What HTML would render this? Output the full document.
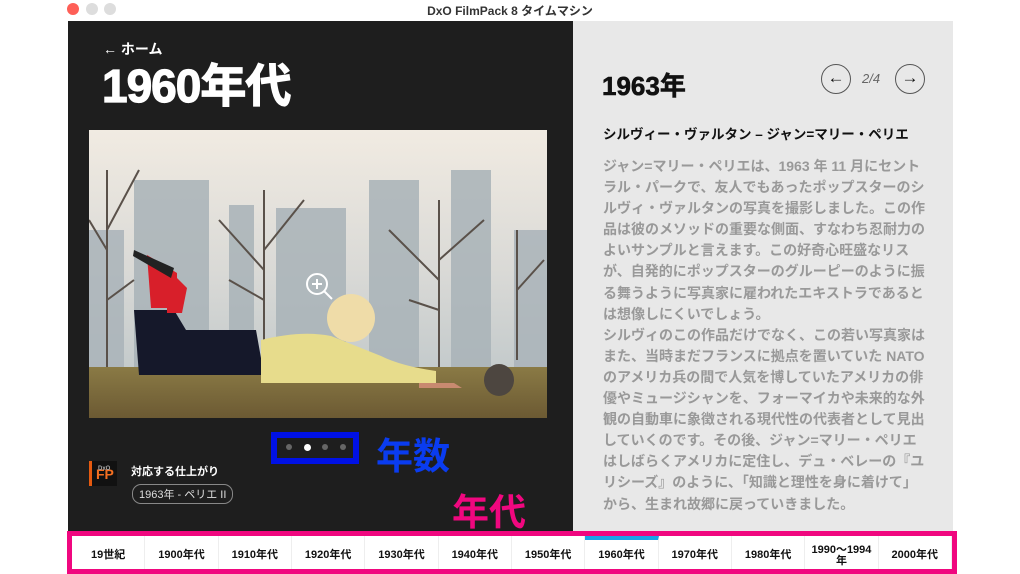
<!DOCTYPE html>
<html><head><meta charset="utf-8"><style>
*{margin:0;padding:0;box-sizing:border-box}
body{width:1020px;height:574px;background:#fff;position:relative;overflow:hidden;font-family:"Liberation Sans","Noto Sans CJK JP",sans-serif}
.t{position:absolute;white-space:nowrap}
.dot{position:absolute;width:12px;height:12px;border-radius:50%;top:3px}
#left{position:absolute;left:68px;top:21px;width:505px;height:512px;background:#1e1e1e}
#right{position:absolute;left:573px;top:21px;width:380px;height:512px;background:#e8e8e8}
.p{position:absolute;left:603px;font-size:14px;font-weight:bold;color:#999;white-space:nowrap;line-height:21.1px}
#nav{position:absolute;left:67px;top:531px;width:890px;height:43px;border:5px solid #f0077f;background:#fff;display:flex}
#nav div{flex:1;border-right:1px solid #eee;font-size:11px;font-weight:bold;color:#111;display:flex;align-items:center;justify-content:center;text-align:center;line-height:11px;position:relative;padding-top:6px}
.circ{position:absolute;width:30px;height:30px;border:1.5px solid #555;border-radius:50%;top:64px;font-size:17px;text-align:center;line-height:26px;color:#111}
</style></head><body>
<div class="dot" style="left:67px;background:#fe5f57"></div>
<div class="dot" style="left:86px;background:#ddd"></div>
<div class="dot" style="left:104px;background:#ddd"></div>
<div class="t" style="left:0;width:1020px;text-align:center;top:2px;font-size:12px;font-weight:bold;color:#333">DxO FilmPack 8 タイムマシン</div>
<div id="left"></div>
<div id="right"></div>
<div class="t" style="left:103px;top:39px;color:#fff;font-size:14px;font-weight:bold">← ホーム</div>
<div class="t" style="left:102px;top:50px;color:#fff;font-size:46px;font-weight:bold;letter-spacing:-1px;-webkit-text-stroke:1.2px #fff">1960年代</div>
<svg style="position:absolute;left:89px;top:130px" width="458" height="288" viewBox="0 0 458 288">
<defs><linearGradient id="sky" x1="0" y1="0" x2="0" y2="1"><stop offset="0" stop-color="#f1ebe2"/><stop offset=".5" stop-color="#d9d9d6"/><stop offset="1" stop-color="#b9c3c6"/></linearGradient>
<linearGradient id="gr" x1="0" y1="0" x2="0" y2="1"><stop offset="0" stop-color="#8a7a45"/><stop offset="1" stop-color="#6c5a33"/></linearGradient></defs>
<rect width="458" height="288" fill="url(#sky)"/>
<g fill="#a9b3b8" opacity=".85"><rect x="45" y="50" width="75" height="190"/><rect x="140" y="75" width="25" height="165"/><rect x="187" y="78" width="70" height="162"/><rect x="280" y="50" width="50" height="190"/><rect x="362" y="40" width="40" height="200"/><rect x="425" y="100" width="33" height="140"/><rect x="0" y="100" width="35" height="140"/></g>
<g stroke="#5a514a" fill="none" stroke-width="2"><path d="M175 225V60M175 140L130 90M175 120L215 70M175 170L140 150"/><path d="M350 245V70M350 150L300 100M350 130L395 90M350 180L320 170"/><path d="M428 230V100M428 160L455 130"/><path d="M18 240V40M18 120L0 90M18 100L50 40M18 170L45 150"/></g>
<rect x="0" y="237" width="458" height="51" fill="url(#gr)"/>
<path d="M45 180h40l12 20h70l8 45H50z" fill="#15182a"/>
<path d="M172 210q40-10 70-4l50 20q20 10 55 15v12H172z" fill="#e7dc8c"/>
<circle cx="262" cy="188" r="24" fill="#efdca8"/>
<path d="M58 125l30 18v35H62z" fill="#d81f2a"/><path d="M78 138l20 20-5 25H78z" fill="#d81f2a"/>
<path d="M45 120l40 18-3 10-38-22z" fill="#222"/>
<path d="M330 253h35l8 5h-43z" fill="#c88a70"/>
<ellipse cx="410" cy="250" rx="15" ry="16" fill="#4d4640"/>
<circle cx="228" cy="154" r="10" fill="none" stroke="#fff" stroke-width="2"/><path d="M235 161l8 8M223 154h10M228 149v10" stroke="#fff" stroke-width="2"/>
</svg>
<div style="position:absolute;left:271px;top:432px;width:88px;height:32px;border:6px solid #0011e6"></div>
<div class="dot" style="left:286px;top:444px;width:6px;height:6px;background:#666"></div>
<div class="dot" style="left:304px;top:444px;width:7px;height:7px;background:#fff"></div>
<div class="dot" style="left:322px;top:444px;width:6px;height:6px;background:#666"></div>
<div class="dot" style="left:340px;top:444px;width:6px;height:6px;background:#666"></div>
<div class="t" style="left:376px;top:426px;font-size:37px;font-weight:bold;color:#0a3cf0">年数</div>
<div class="t" style="left:452px;top:482px;font-size:37px;font-weight:bold;color:#f0077f">年代</div>
<div style="position:absolute;left:89px;top:461px;width:28px;height:25px;background:#111;border-left:3px solid #e55a10;color:#f36f21;font-size:14px;font-weight:bold;padding:7px 0 0 4px;line-height:12px"><span style="position:absolute;top:2px;left:6px;font-size:6px;color:#aaa">DxO</span>FP</div>
<div class="t" style="left:131px;top:463px;font-size:11px;font-weight:bold;color:#fff">対応する仕上がり</div>
<div class="t" style="left:132px;top:484px;font-size:11px;color:#ddd;border:1px solid #888;border-radius:9px;padding:1px 6px">1963年 - ペリエ II</div>
<div class="t" style="left:602px;top:66px;font-size:26px;font-weight:bold;color:#111;-webkit-text-stroke:.6px #111">1963年</div>
<div class="circ" style="left:821px">←</div>
<div class="t" style="left:862px;top:71px;font-size:13px;color:#666;font-style:italic">2/4</div>
<div class="circ" style="left:895px">→</div>
<div class="t" style="left:603px;top:123px;font-size:13.5px;font-weight:bold;color:#111">シルヴィー・ヴァルタン – ジャン=マリー・ペリエ</div>
<div class="p" style="top:156px">ジャン=マリー・ペリエは、1963 年 11 月にセント<br>ラル・パークで、友人でもあったポップスターのシ<br>ルヴィ・ヴァルタンの写真を撮影しました。この作<br>品は彼のメソッドの重要な側面、すなわち忍耐力の<br>よいサンプルと言えます。この好奇心旺盛なリス<br>が、自発的にポップスターのグルーピーのように振<br>る舞うように写真家に雇われたエキストラであると<br>は想像しにくいでしょう。<br>シルヴィのこの作品だけでなく、この若い写真家は<br>また、当時まだフランスに拠点を置いていた NATO<br>のアメリカ兵の間で人気を博していたアメリカの俳<br>優やミュージシャンを、フォーマイカや未来的な外<br>観の自動車に象徴される現代性の代表者として見出<br>していくのです。その後、ジャン=マリー・ペリエ<br>はしばらくアメリカに定住し、デュ・ベレーの『ユ<br>リシーズ』のように、「知識と理性を身に着けて」<br>から、生まれ故郷に戻っていきました。</div>
<div id="nav">
<div>19世紀</div><div>1900年代</div><div>1910年代</div><div>1920年代</div><div>1930年代</div><div>1940年代</div><div>1950年代</div><div style="border-top:4px solid #1aa3e8;padding-top:2px">1960年代</div><div>1970年代</div><div>1980年代</div><div>1990〜1994<br>年</div><div>2000年代</div>
</div>
</body></html>
